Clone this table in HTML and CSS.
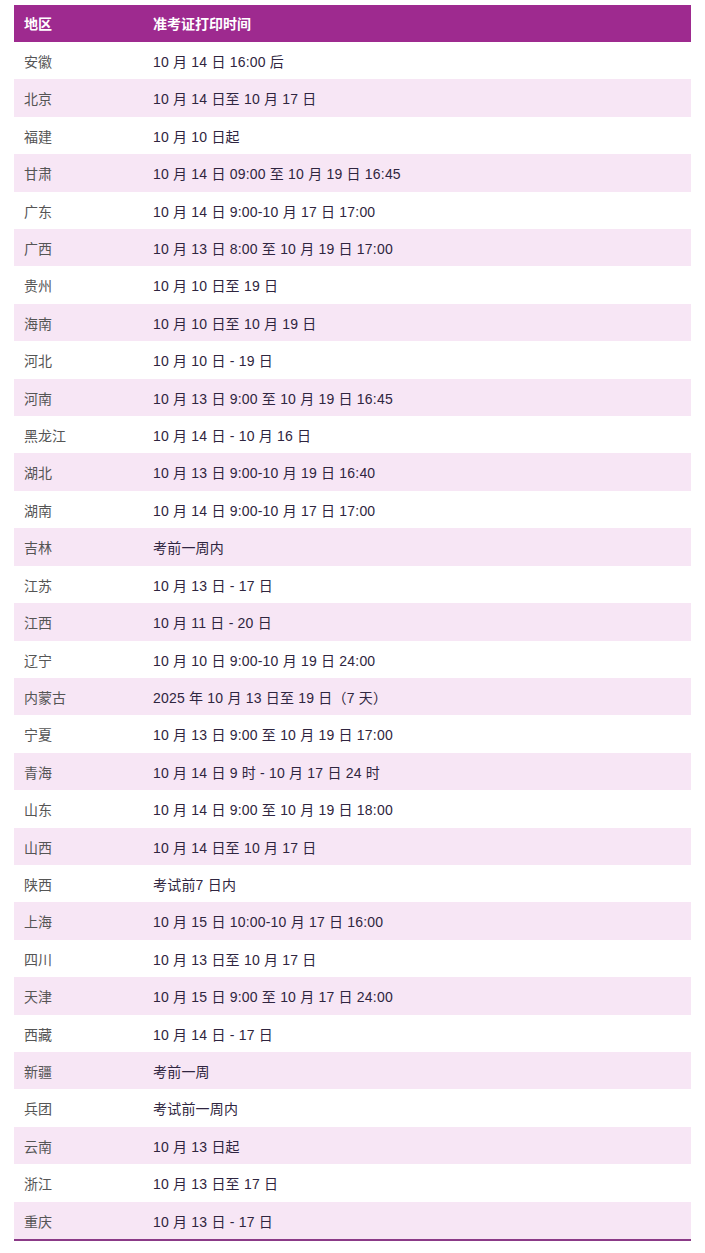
FILE: index.html
```html
<!DOCTYPE html>
<html lang="zh">
<head>
<meta charset="utf-8">
<link rel="stylesheet" href="styles.css">
</head>
<body>
<table class="schedule">
<thead>
<tr><th class="c1">地区</th><th class="c2">准考证打印时间</th></tr>
</thead>
<tbody>
<tr><td class="c1">安徽</td><td class="c2">10 月 14 日 16:00 后</td></tr>
<tr><td class="c1">北京</td><td class="c2">10 月 14 日至 10 月 17 日</td></tr>
<tr><td class="c1">福建</td><td class="c2">10 月 10 日起</td></tr>
<tr><td class="c1">甘肃</td><td class="c2">10 月 14 日 09:00 至 10 月 19 日 16:45</td></tr>
<tr><td class="c1">广东</td><td class="c2">10 月 14 日 9:00-10 月 17 日 17:00</td></tr>
<tr><td class="c1">广西</td><td class="c2">10 月 13 日 8:00 至 10 月 19 日 17:00</td></tr>
<tr><td class="c1">贵州</td><td class="c2">10 月 10 日至 19 日</td></tr>
<tr><td class="c1">海南</td><td class="c2">10 月 10 日至 10 月 19 日</td></tr>
<tr><td class="c1">河北</td><td class="c2">10 月 10 日 - 19 日</td></tr>
<tr><td class="c1">河南</td><td class="c2">10 月 13 日 9:00 至 10 月 19 日 16:45</td></tr>
<tr><td class="c1">黑龙江</td><td class="c2">10 月 14 日 - 10 月 16 日</td></tr>
<tr><td class="c1">湖北</td><td class="c2">10 月 13 日 9:00-10 月 19 日 16:40</td></tr>
<tr><td class="c1">湖南</td><td class="c2">10 月 14 日 9:00-10 月 17 日 17:00</td></tr>
<tr><td class="c1">吉林</td><td class="c2">考前一周内</td></tr>
<tr><td class="c1">江苏</td><td class="c2">10 月 13 日 - 17 日</td></tr>
<tr><td class="c1">江西</td><td class="c2">10 月 11 日 - 20 日</td></tr>
<tr><td class="c1">辽宁</td><td class="c2">10 月 10 日 9:00-10 月 19 日 24:00</td></tr>
<tr><td class="c1">内蒙古</td><td class="c2">2025 年 10 月 13 日至 19 日（7 天）</td></tr>
<tr><td class="c1">宁夏</td><td class="c2">10 月 13 日 9:00 至 10 月 19 日 17:00</td></tr>
<tr><td class="c1">青海</td><td class="c2">10 月 14 日 9 时 - 10 月 17 日 24 时</td></tr>
<tr><td class="c1">山东</td><td class="c2">10 月 14 日 9:00 至 10 月 19 日 18:00</td></tr>
<tr><td class="c1">山西</td><td class="c2">10 月 14 日至 10 月 17 日</td></tr>
<tr><td class="c1">陕西</td><td class="c2">考试前7 日内</td></tr>
<tr><td class="c1">上海</td><td class="c2">10 月 15 日 10:00-10 月 17 日 16:00</td></tr>
<tr><td class="c1">四川</td><td class="c2">10 月 13 日至 10 月 17 日</td></tr>
<tr><td class="c1">天津</td><td class="c2">10 月 15 日 9:00 至 10 月 17 日 24:00</td></tr>
<tr><td class="c1">西藏</td><td class="c2">10 月 14 日 - 17 日</td></tr>
<tr><td class="c1">新疆</td><td class="c2">考前一周</td></tr>
<tr><td class="c1">兵团</td><td class="c2">考试前一周内</td></tr>
<tr><td class="c1">云南</td><td class="c2">10 月 13 日起</td></tr>
<tr><td class="c1">浙江</td><td class="c2">10 月 13 日至 17 日</td></tr>
<tr><td class="c1">重庆</td><td class="c2">10 月 13 日 - 17 日</td></tr>
</tbody>
</table>
</body>
</html>
```
FILE: styles.css
```css
html, body {
  background: #ffffff;
}
body {
  margin: 5px 14px;
  font-family: "Liberation Sans", "Noto Sans CJK SC", sans-serif;
  font-size: 14px;
}
.schedule {
  width: 677px;
  border-collapse: collapse;
  border-spacing: 0;
  border-bottom: 2px solid #8b3a87;
}
.schedule th {
  background: #9e2a8f;
  color: #ffffff;
  font-weight: bold;
  text-align: left;
  padding: 2px 10px 0;
  height: 37px;
  line-height: 21px;
  box-sizing: border-box;
}
.schedule td {
  padding: 10px 10px 6px;
  line-height: 21.4px;
  text-align: left;
}
.schedule .c1 {
  width: 109px;
}
.schedule td.c1 {
  color: #555555;
}
.schedule td.c2 {
  color: #2f2540;
  letter-spacing: 0.2px;
}
.schedule tbody tr:nth-child(even) td {
  background: #f7e6f5;
}
```
